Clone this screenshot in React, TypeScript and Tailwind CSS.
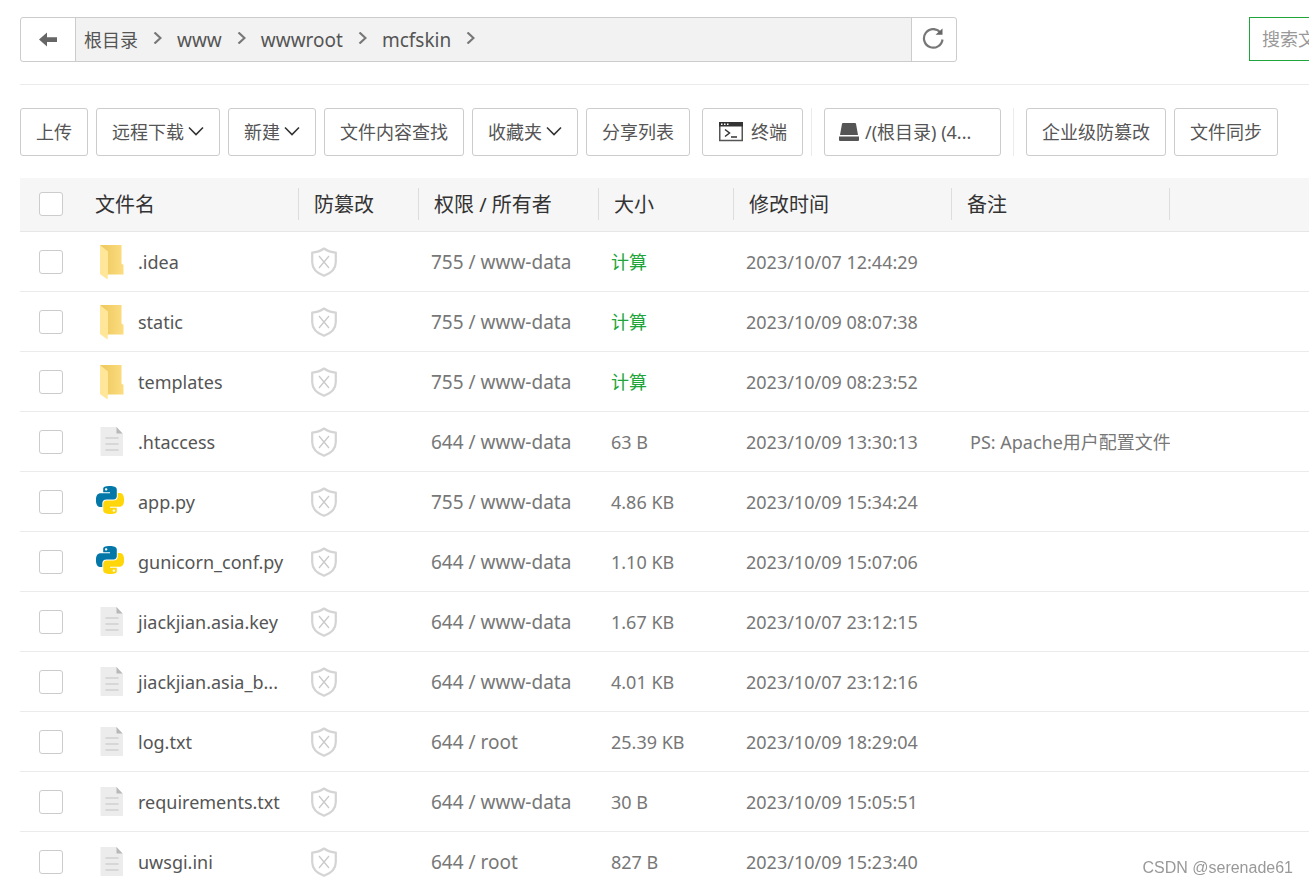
import type { ReactNode } from 'react';

type Kind = 'folder' | 'file' | 'python';

interface Entry {
  name: string;
  kind: Kind;
  mode: string;
  size?: string;
  time: string;
  note?: string;
}

const entries: Entry[] = [
  { name: '.idea', kind: 'folder', mode: '755 / www-data', time: '2023/10/07 12:44:29' },
  { name: 'static', kind: 'folder', mode: '755 / www-data', time: '2023/10/09 08:07:38' },
  { name: 'templates', kind: 'folder', mode: '755 / www-data', time: '2023/10/09 08:23:52' },
  { name: '.htaccess', kind: 'file', mode: '644 / www-data', size: '63 B', time: '2023/10/09 13:30:13', note: 'PS: Apache用户配置文件' },
  { name: 'app.py', kind: 'python', mode: '755 / www-data', size: '4.86 KB', time: '2023/10/09 15:34:24' },
  { name: 'gunicorn_conf.py', kind: 'python', mode: '644 / www-data', size: '1.10 KB', time: '2023/10/09 15:07:06' },
  { name: 'jiackjian.asia.key', kind: 'file', mode: '644 / www-data', size: '1.67 KB', time: '2023/10/07 23:12:15' },
  { name: 'jiackjian.asia_b...', kind: 'file', mode: '644 / www-data', size: '4.01 KB', time: '2023/10/07 23:12:16' },
  { name: 'log.txt', kind: 'file', mode: '644 / root', size: '25.39 KB', time: '2023/10/09 18:29:04' },
  { name: 'requirements.txt', kind: 'file', mode: '644 / www-data', size: '30 B', time: '2023/10/09 15:05:51' },
  { name: 'uwsgi.ini', kind: 'file', mode: '644 / root', size: '827 B', time: '2023/10/09 15:23:40' },
];

const crumbs = ['根目录', 'www', 'wwwroot', 'mcfskin'];
const columns = ['文件名', '防篡改', '权限 / 所有者', '大小', '修改时间', '备注'];

const snake =
  'M14.25.18l.9.2.73.26.59.3.45.32.34.34.25.34.16.33.1.3.04.26.02.2-.01.13V8.5l-.05.63-.13.55-.21.46-.26.38-.3.31-.33.25-.35.19-.35.14-.33.1-.3.07-.26.04-.21.02H8.77l-.69.05-.59.14-.5.22-.41.27-.33.32-.27.35-.2.36-.15.37-.1.35-.07.32-.04.27-.02.21v3.06H3.17l-.21-.03-.28-.07-.32-.12-.35-.18-.36-.26-.36-.36-.35-.46-.32-.59-.28-.73-.21-.88-.14-1.05-.05-1.23.06-1.22.16-1.04.24-.87.32-.71.36-.57.4-.44.42-.33.42-.24.4-.16.36-.1.32-.05.24-.01h.16l.06.01h8.16v-.83H6.18l-.01-2.75-.02-.37.05-.34.11-.31.17-.28.25-.26.31-.23.38-.2.44-.18.51-.15.58-.12.64-.1.71-.06.77-.04.84-.02 1.27.05zm-6.3 1.98l-.23.33-.08.41.08.41.23.34.33.22.41.09.41-.09.33-.22.23-.34.08-.41-.08-.41-.23-.33-.33-.22-.41-.09-.41.09z';

function PythonIcon() {
  return (
    <svg className="mb-1 size-7" viewBox="0 0 24 24" aria-hidden="true">
      <path d={snake} fill="#0277a8" />
      <path d={snake} fill="#ffd60a" transform="rotate(180 12 12)" />
    </svg>
  );
}

function FolderIcon() {
  return (
    <svg className="ml-1 h-9 w-6" viewBox="0 0 24 36" aria-hidden="true">
      <defs>
        <linearGradient id="folder-back" x1="0" y1="0" x2="1" y2="0">
          <stop offset="0.2" stopColor="#efcb63" />
          <stop offset="1" stopColor="#fcdd80" />
        </linearGradient>
      </defs>
      <path d="M0 1h21.500v18.500l2 1.500v9.500H7z" fill="url(#folder-back)" />
      <path d="M0 1l8 6.500v21l-.500 7L0 30z" fill="#ffe699" />
    </svg>
  );
}

function FileIcon() {
  return (
    <svg className="ml-1 h-8 w-6" viewBox="0 0 24 32" aria-hidden="true">
      <path d="M1 1h15.500L23 7.500v21.500a1 1 0 0 1-1 1H1.500a1 1 0 0 1-1-1V1.500z" fill="#ececec" />
      <path d="M16.500 1L22.500 7.500h-6z" fill="#b8b8b8" />
      <path d="M5.500 12h13M5.500 18h13M5.500 24h13" stroke="#cfcfcf" strokeWidth="1.500" />
    </svg>
  );
}

function ShieldIcon() {
  return (
    <svg className="h-8 w-7" viewBox="0 0 28 32" fill="none" stroke="#d4d4d4" aria-hidden="true">
      <path d="M14 2.500C10.500 5 6.500 6.300 2.200 6.600v9.400c0 6.500 4.800 11.200 11.800 13.800 7-2.600 11.800-7.300 11.800-13.800V6.600C21.500 6.300 17.500 5 14 2.500z" strokeWidth="2.200" strokeLinejoin="round" />
      <path d="M9 10l10 12M19 10L9 22" stroke="#cacaca" strokeWidth="1.300" />
    </svg>
  );
}

function Caret() {
  return (
    <svg className="ml-1 h-4 w-4" viewBox="0 0 16 16" fill="none" stroke="#333" strokeWidth="1.600" aria-hidden="true">
      <path d="M1 3.500L8 10.500l7-7" />
    </svg>
  );
}

function Check({ label }: { label: string }) {
  return (
    <input
      type="checkbox"
      aria-label={label}
      className="block size-6 appearance-none rounded-[3px] border border-[#ccc] bg-white checked:bg-[#20a53a]"
    />
  );
}

function ToolButton({ children }: { children: ReactNode }) {
  return (
    <button type="button" className="flex h-12 shrink-0 items-center rounded-[3px] border border-[#ccc] bg-white px-[15px] whitespace-nowrap">
      {children}
    </button>
  );
}

const icons = { folder: FolderIcon, file: FileIcon, python: PythonIcon };

export default function App() {
  return (
    <main className="h-screen overflow-hidden bg-white pl-5 font-['Noto_Sans','Noto_Sans_CJK_SC',sans-serif] text-[18px] leading-6 text-[#555]">
      <header className="flex items-start border-b border-[#ebebeb] pt-[17px] pb-[22px]">
        <nav aria-label="路径" className="flex h-[45px] w-[937px] shrink-0 rounded-[3px] border border-[#ccc]">
          <button type="button" aria-label="返回" className="flex w-[55px] items-center justify-center border-r border-[#ccc]">
            <svg className="h-4 w-[18px]" viewBox="0 0 18 16" fill="#666" aria-hidden="true">
              <path d="M0 7.500l8-7v4.800h10v4.600H8v4.600z" />
            </svg>
          </button>
          <ol className="flex grow items-center bg-[#f2f2f2] pl-2">
            {crumbs.map((crumb) => (
              <li key={crumb} className="flex items-center text-[19px] first:text-[18px]">
                <a href="#">{crumb}</a>
                <svg className="mx-[15px] mb-1 h-3 w-[9px]" viewBox="0 0 9 12" fill="none" stroke="#777" strokeWidth="2.200" aria-hidden="true">
                  <path d="M1.500 .5L7.500 6l-6 5.500" />
                </svg>
              </li>
            ))}
          </ol>
          <button type="button" aria-label="刷新" className="flex w-[45px] items-center justify-center border-l border-[#ccc]">
            <svg className="size-6" viewBox="0 0 24 24" fill="none" stroke="#777" strokeWidth="2.200" aria-hidden="true">
              <path d="M18.500 4.500A9.300 9.300 0 1 0 20.500 11.500" />
              <path d="M13.500 6.800h7V.5z" fill="#666" stroke="none" />
            </svg>
          </button>
        </nav>
        <input
          type="text"
          aria-label="搜索"
          placeholder="搜索文件/目录"
          className="ml-[292px] h-11 w-[260px] shrink-0 border border-[#20a53a] px-3 outline-none placeholder:text-[#999]"
        />
      </header>

      <div className="flex items-start gap-2 pt-[23px] pb-[22px]">
        <ToolButton>上传</ToolButton>
        <ToolButton>远程下载<Caret /></ToolButton>
        <ToolButton>新建<Caret /></ToolButton>
        <ToolButton>文件内容查找</ToolButton>
        <ToolButton>收藏夹<Caret /></ToolButton>
        <ToolButton>分享列表</ToolButton>
        <div className="flex shrink-0 gap-2 border-r border-[#ebebeb] pr-2 pl-1">
          <ToolButton>
            <svg className="mr-2 ml-px h-5 w-6" viewBox="0 0 24 20" aria-hidden="true">
              <path d="M.75 1h22.500v17.500H.75z" fill="#fff" stroke="#555" strokeWidth="1.500" />
              <path d="M0 0h24v4.500H0z" fill="#333" />
              <path d="M2 2.200h1.500M5 2.200h1.500M8 2.200h1.500" stroke="#fff" strokeWidth="1.500" />
              <path d="M6 7.500l4.500 3.500L6 14.500M12 15h6" fill="none" stroke="#333" strokeWidth="1.500" />
            </svg>
            终端
          </ToolButton>
        </div>
        <div className="flex shrink-0 border-r border-[#ebebeb] pr-3 pl-1">
          <button type="button" className="flex h-12 w-[177px] items-center rounded-[3px] border border-[#ccc] px-[14px] whitespace-nowrap">
            <svg className="mr-1.5 h-[18px] w-5 shrink-0" viewBox="0 0 20 18" fill="#555" aria-hidden="true">
              <path d="M4 0h12a1 1 0 0 1 1 .8L19 12H1L3 .8A1 1 0 0 1 4 0zM0 13.500h20V17a1 1 0 0 1-1 1H1a1 1 0 0 1-1-1z" />
            </svg>
            /(根目录) (4...
          </button>
        </div>
        <div className="flex gap-2 pl-1">
          <ToolButton>企业级防篡改</ToolButton>
          <ToolButton>文件同步</ToolButton>
        </div>
      </div>

      <table className="w-full table-fixed border-collapse text-left">
        <colgroup>
          <col className="w-[60px]" />
          <col className="w-[219px]" />
          <col className="w-[120px]" />
          <col className="w-[180px]" />
          <col className="w-[135px]" />
          <col className="w-[218px]" />
          <col className="w-[218px]" />
          <col />
        </colgroup>
        <thead>
          <tr className="h-[53px] border-b border-[#e6e6e6] bg-[#f6f6f6] text-[20px] text-[#333]">
            <th scope="col" className="pl-[19px]"><Check label="全选" /></th>
            {columns.map((column) => (
              <th key={column} scope="col" className="p-0 font-normal whitespace-nowrap">
                <div className="flex h-8 items-center border-r border-[#ddd] pt-0.5 pl-[15px]">{column}</div>
              </th>
            ))}
            <td />
          </tr>
        </thead>
        <tbody className="text-[#777]">
          {entries.map((entry) => {
            const Icon = icons[entry.kind];
            return (
              <tr key={entry.name} className="h-[60px] border-b border-[#ebebeb] whitespace-nowrap [&>td]:pt-0.5">
                <td className="pl-[19px]"><Check label={entry.name} /></td>
                <td className="pl-4">
                  <div className="flex items-center text-[#555]">
                    <span className="w-[42px] shrink-0"><Icon /></span>
                    <a href="#">{entry.name}</a>
                  </div>
                </td>
                <td className="pl-[11px]"><ShieldIcon /></td>
                <td className="pl-3 text-[19px]">{entry.mode}</td>
                <td className="pl-3">
                  {entry.size ?? <a href="#" className="text-[#20a53a]">计算</a>}
                </td>
                <td className="pl-3">{entry.time}</td>
                <td className="overflow-hidden pl-[18px]">{entry.note}</td>
                <td />
              </tr>
            );
          })}
        </tbody>
      </table>

      <p className="fixed right-4 bottom-1 font-['Liberation_Sans',sans-serif] text-[16px] text-[#999]">CSDN @serenade61</p>
    </main>
  );
}
